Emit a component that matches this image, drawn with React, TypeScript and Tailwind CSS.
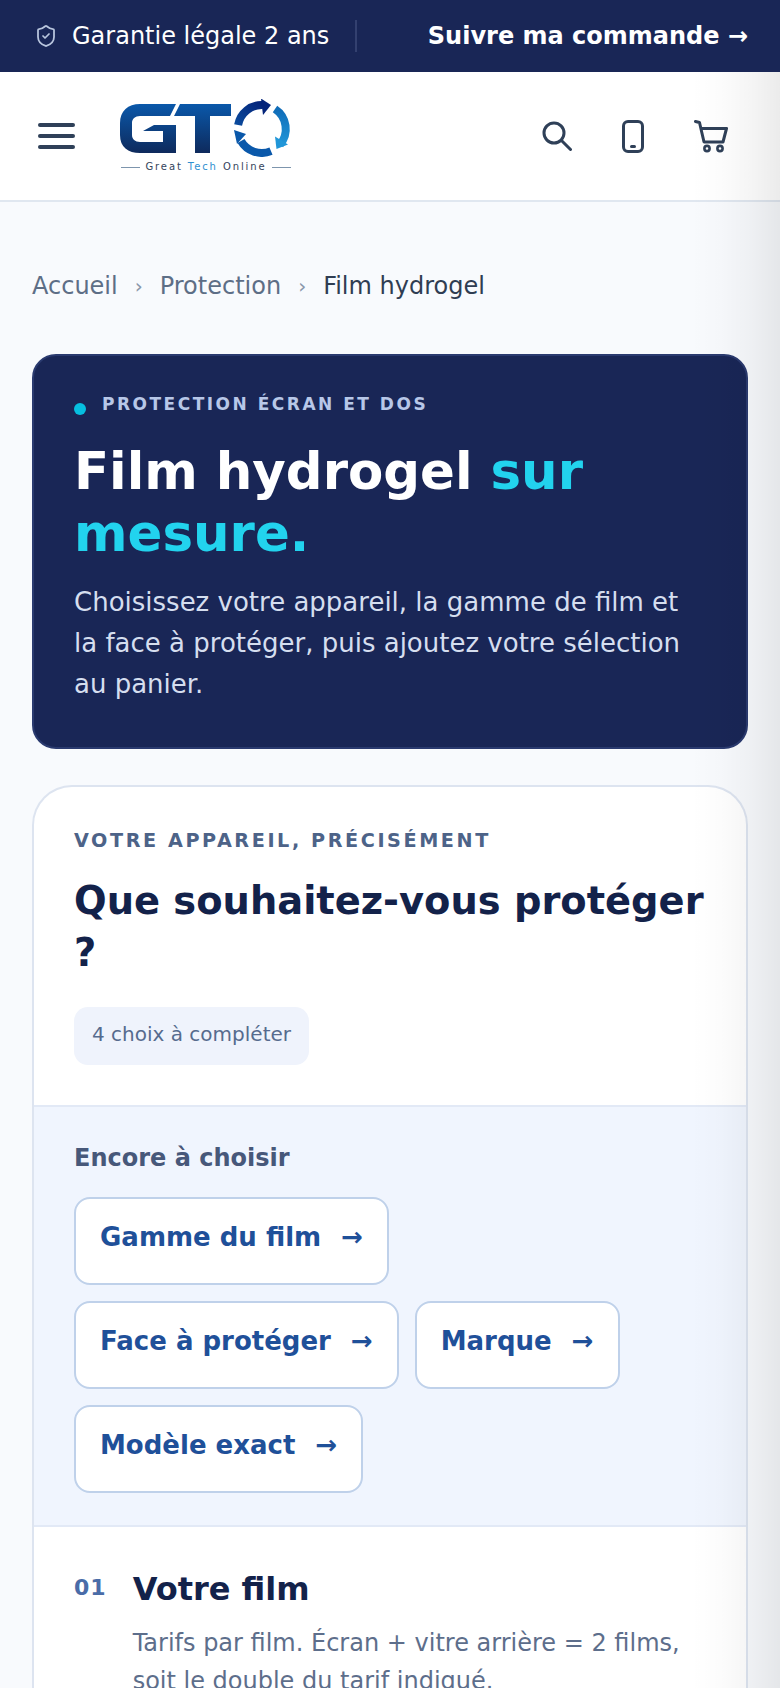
import React from 'react'
import { ShieldCheck } from 'lucide-react'

const Logo = () => (
  <div className="flex w-[172px] flex-col items-center">
    <svg width="172" height="58" viewBox="0 0 172 58" fill="none">
      <defs>
        <linearGradient id="gt" x1="0" y1="0" x2="0" y2="1">
          <stop offset="0" stopColor="#0a58aa" />
          <stop offset="1" stopColor="#0e2a5c" />
        </linearGradient>
        <linearGradient id="ringTop" x1="0" y1="1" x2="1" y2="0">
          <stop offset="0" stopColor="#0a4a9c" />
          <stop offset="1" stopColor="#04247a" />
        </linearGradient>
        <linearGradient id="ringRight" x1="0" y1="0" x2="0" y2="1">
          <stop offset="0" stopColor="#0f6cb8" />
          <stop offset="1" stopColor="#2196d8" />
        </linearGradient>
      </defs>
      <path d="M56 5H20C8 5 0 12 0 24V36C0 48 8 54 20 54H56V26H34L23 32H43V43H20C15 43 12 40 12 36V24C12 20 15 17 20 17H50Z" fill="url(#gt)" />
      <path d="M60 5H111V17H90V54H75V17H54Z" fill="url(#gt)" />
      <path d="M118.1 26A24 24 0 0 1 143 6" stroke="url(#ringTop)" strokeWidth="8" />
      <path d="M151 6L141 -0.5L143 16Z" fill="#04247a" />
      <path d="M155 10A24 24 0 0 1 160 45.6" stroke="url(#ringRight)" strokeWidth="8" />
      <path d="M156.5 50L168 45.5L155 37.5Z" fill="#2196d8" />
      <path d="M151 52.1A24 24 0 0 1 121 42" stroke="#0a58aa" strokeWidth="8" />
      <path d="M114 31L126 35L117 45Z" fill="#0a58aa" />
    </svg>
    <div className="mt-[4px] flex items-center gap-[5px] whitespace-nowrap text-[10px] leading-[12px] tracking-[1.9px] text-[#34445c]">
      <span className="h-px w-[19px] bg-[#7d95ad]" />
      <span>Great <span className="text-[#2f8fd0]">Tech</span> Online</span>
      <span className="h-px w-[19px] bg-[#7d95ad]" />
    </div>
  </div>
)

const SearchIcon = () => (
  <svg width="30" height="30" viewBox="0 0 30 30" fill="none" stroke="currentColor" strokeWidth="3" strokeLinecap="round">
    <circle cx="12" cy="12" r="10" />
    <path d="M20 20L28.5 28.5" />
  </svg>
)

const PhoneIcon = () => (
  <svg width="22" height="33" viewBox="0 0 22 33" fill="none" stroke="currentColor" strokeWidth="3" strokeLinecap="round">
    <rect x="1.5" y="1.5" width="19" height="30" rx="4.5" />
    <path d="M9.5 26.5H12.5" />
  </svg>
)

const CartIcon = () => (
  <svg width="34" height="33" viewBox="0 0 34 33" fill="none" stroke="currentColor" strokeWidth="3" strokeLinecap="round" strokeLinejoin="round">
    <path d="M1.5 1.5L5.5 2.5L10 22H29L32.5 8.5H7" />
    <circle cx="13" cy="28.5" r="2.6" strokeWidth="2.6" />
    <circle cx="26" cy="28.5" r="2.6" strokeWidth="2.6" />
  </svg>
)

const Chip = ({ label }: { label: string }) => (
  <button className="flex h-[88px] items-center gap-[20px] rounded-[16px] border-2 border-[#bfd1ea] bg-white px-[24px] pb-[6px] text-[26px] font-bold text-[#1f5099]">
    <span>{label}</span>
    <span>→</span>
  </button>
)

export default function App() {
  return (
    <div className="relative h-[1688px] overflow-hidden bg-[#f8fafd] font-['DejaVu_Sans',sans-serif]">
      <div className="flex h-[72px] items-center justify-between bg-[#192656] pl-[34px] pr-[32px] text-white">
        <div className="flex items-center gap-[14px]">
          <ShieldCheck className="h-6 w-6 text-[#b9c6de]" strokeWidth={1.75} />
          <span className="text-[24px]">Garantie légale 2 ans</span>
          <span className="ml-[12px] h-[32px] w-[2px] bg-[#33406f]" />
        </div>
        <span className="text-[24px] font-bold">Suivre ma commande →</span>
      </div>

      <header className="flex h-[130px] items-center justify-between border-b-2 border-[#e0e7f0] bg-white pl-[38px] pr-[52px]">
        <div className="flex items-center gap-[45px]">
          <div className="flex w-[37px] flex-col gap-[7px]">
            <span className="h-[4px] rounded-full bg-[#2f4058]" />
            <span className="h-[4px] rounded-full bg-[#2f4058]" />
            <span className="h-[4px] rounded-full bg-[#2f4058]" />
          </div>
          <Logo />
        </div>
        <div className="flex items-center gap-[50px] text-[#2f4058]">
          <SearchIcon />
          <PhoneIcon />
          <CartIcon />
        </div>
      </header>

      <main className="px-[32px]">
        <nav className="flex h-[152px] items-center gap-[17px] pt-[16px] text-[24px] text-[#5d6e86]">
          <span>Accueil</span>
          <span className="text-[20px] text-[#8a97aa]">›</span>
          <span>Protection</span>
          <span className="text-[20px] text-[#8a97aa]">›</span>
          <span className="text-[#2f3d52]">Film hydrogel</span>
        </nav>

        <section className="rounded-[24px] border-2 border-[#2a3a6f] bg-[#192656] px-[40px] pb-[42px] pt-[36px]">
          <div className="flex items-center gap-[16px]">
            <span className="mt-[9px] h-[12px] w-[12px] rounded-full bg-[#06bfe0]" />
            <span className="text-[17px] font-bold tracking-[2.5px] text-[#b7c7e8]">PROTECTION ÉCRAN ET DOS</span>
          </div>
          <h1 className="mt-[22px] text-[51.4px] font-bold leading-[62px] text-white">
            Film hydrogel <span className="text-[#22d3ee]">sur mesure.</span>
          </h1>
          <p className="mt-[18px] text-[26px] leading-[41px] text-[#d5deef]">
            Choisissez votre appareil, la gamme de film et la face à protéger, puis ajoutez votre sélection au panier.
          </p>
        </section>

        <section className="mt-[36px] overflow-hidden rounded-t-[40px] border-2 border-b-0 border-[#dde4f0] bg-white">
          <div className="px-[40px] pb-[40px] pt-[42px]">
            <p className="text-[19.2px] font-bold leading-[24px] tracking-[2.58px] text-[#4d6388]">VOTRE APPAREIL, PRÉCISÉMENT</p>
            <h2 className="mt-[22px] text-[38.4px] font-bold leading-[52px] text-[#13224a]">Que souhaitez-vous protéger ?</h2>
            <div className="mt-[28px] inline-flex h-[58px] items-center rounded-[14px] bg-[#eff3fc] px-[18px] pb-[4px] text-[20px] text-[#566b8e]">4 choix à compléter</div>
          </div>
          <div className="border-y-2 border-[#e2e9f6] bg-[#f0f5fe] px-[40px] pb-[32px] pt-[36px]">
            <p className="text-[24px] font-bold leading-[30px] text-[#47587a]">Encore à choisir</p>
            <div className="mt-[24px] flex flex-wrap gap-[16px]">
              <Chip label="Gamme du film" />
              <Chip label="Face à protéger" />
              <Chip label="Marque" />
              <Chip label="Modèle exact" />
            </div>
          </div>
          <div className="flex gap-[26px] px-[40px] pt-[41px]">
            <span className="mt-[2px] text-[22px] font-bold leading-[36px] tracking-[1px] text-[#4a6ca8]">01</span>
            <div>
              <h3 className="text-[32px] font-bold leading-[42px] text-[#13224a]">Votre film</h3>
              <p className="mt-[14px] text-[24px] leading-[38.4px] text-[#5d6e8b]">
                Tarifs par film. Écran + vitre arrière = 2 films, soit le double du tarif indiqué.
              </p>
            </div>
          </div>
        </section>
      </main>

      <div className="pointer-events-none absolute bottom-0 right-0 top-[72px] w-[90px] bg-[linear-gradient(to_left,rgba(0,0,0,0.08),rgba(0,0,0,0.04)_33%,rgba(0,0,0,0.01)_67%,transparent)]" />
    </div>
  )
}
